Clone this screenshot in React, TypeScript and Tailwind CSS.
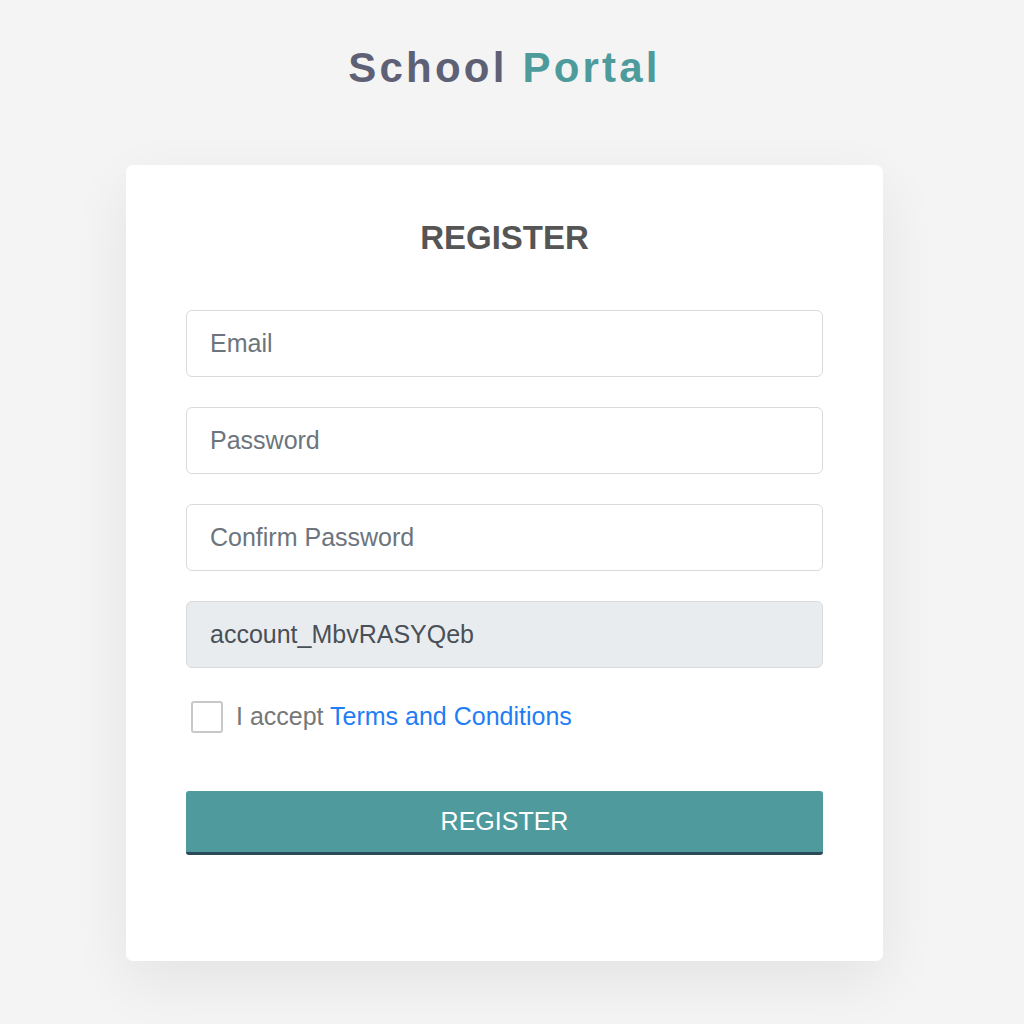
const fieldClass =
  "h-[67px] w-full rounded-[6px] border border-[#dadada] bg-white px-[23px] text-[25px] text-[#495057] placeholder:text-[#6c757d] outline-none";

export default function App() {
  return (
    <div className="min-h-screen bg-[#f4f4f4] font-['Liberation_Sans',Arial,sans-serif]">
      <div className="w-[1009px] pt-[43px]">
        <h1 className="text-center text-[42px] font-bold leading-[50px] tracking-[3.2px] text-[#5e6175]">
          School <span className="text-[#4e9b9c]">Portal</span>
        </h1>

        <div className="mx-auto mt-[72px] w-[757px] rounded-[7px] bg-white px-[60px] pt-[54px] pb-[106px] shadow-[0_20px_60px_rgba(0,0,0,0.07)]">
          <h2 className="text-center text-[33px] font-bold leading-[38px] text-[#555555]">
            REGISTER
          </h2>

          <form className="mt-[53px] flex flex-col gap-[30px]">
            <input type="email" placeholder="Email" className={fieldClass} />
            <input
              type="password"
              placeholder="Password"
              className={fieldClass}
            />
            <input
              type="password"
              placeholder="Confirm Password"
              className={fieldClass}
            />
            <input
              type="text"
              value="account_MbvRASYQeb"
              disabled
              readOnly
              className="h-[67px] w-full rounded-[6px] border border-[#dadada] bg-[#e9ecef] px-[23px] text-[25px] text-[#495057] outline-none"
            />
          </form>

          <label className="mt-[33px] flex h-[32px] items-center gap-[13px] pl-[5px] text-[25px] text-[#777777]">
            <span className="block h-[32px] w-[32px] rounded-[3px] border-2 border-[#c8c8c8] bg-white" />
            <span>
              I accept{" "}
              <a href="#" className="text-[#1f7df5]">
                Terms and Conditions
              </a>
            </span>
          </label>

          <button
            type="button"
            className="mt-[58px] h-[64px] w-full rounded-[3px] border-b-[3px] border-[#2b4956] bg-[#4f9a9d] text-[25px] text-white"
          >
            REGISTER
          </button>
        </div>
      </div>
    </div>
  );
}
